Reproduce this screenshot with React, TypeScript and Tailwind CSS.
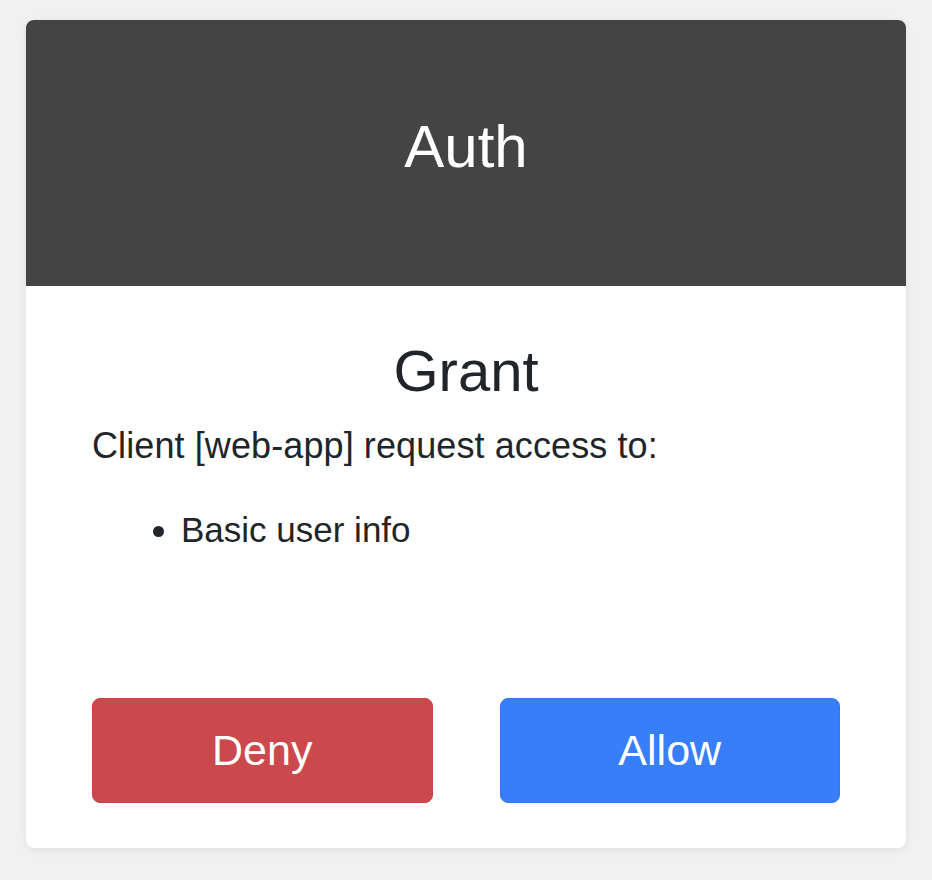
import { FC } from "react";

const App: FC = () => {
  return (
    <div className="min-h-screen w-full bg-[#f1f1f1] px-[26px] pt-[20px] pb-[32px] font-['Liberation_Sans',Arial,sans-serif] text-[#212529]">
      <div className="w-[880px] rounded-lg bg-white shadow-[0_2px_8px_rgba(0,0,0,0.08)] overflow-hidden">
        <div className="h-[266px] bg-[#444444] flex items-center justify-center pb-[12px]">
          <h1 className="text-[60px] leading-none text-white">Auth</h1>
        </div>
        <div className="px-[66px] pb-[45px]">
          <h2 className="mt-[50px] text-[58px] leading-[1.2] text-center">Grant</h2>
          <p className="mt-[14px] text-[36px] leading-[1.46] tracking-[0.1px]">
            Client [web-app] request access to:
          </p>
          <ul className="mt-[32px] list-disc pl-[89px] text-[35px] leading-[1.5]">
            <li>Basic user info</li>
          </ul>
          <div className="mt-[141px] grid grid-cols-2 gap-[67px]">
            <button className="h-[105px] rounded-lg border border-[#c8434a] bg-[#cb484d] text-white text-[43px] flex items-center justify-center">
              Deny
            </button>
            <button className="h-[105px] rounded-lg border border-[#3479f0] bg-[#377ef8] text-white text-[43px] flex items-center justify-center">
              Allow
            </button>
          </div>
        </div>
      </div>
    </div>
  );
};

export default App;
